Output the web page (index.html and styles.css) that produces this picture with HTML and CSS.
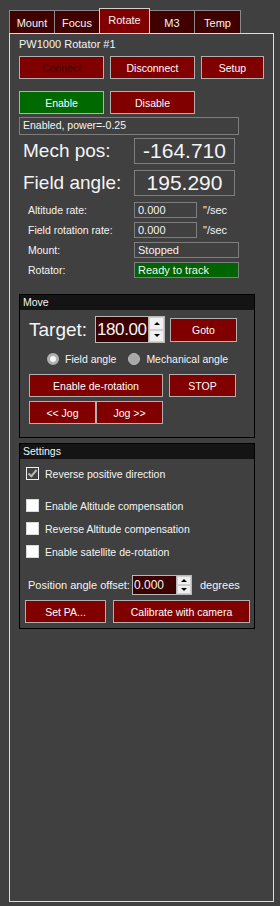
FILE: index.html
```html
<!DOCTYPE html>
<html lang="en">
<head>
  <meta charset="UTF-8">
  <title>PW1000 Rotator</title>
  <link rel="stylesheet" href="styles.css">
</head>
<body>
  <div class="window">
    <!-- tab strip -->
    <div class="tabs">
      <div class="tab">Mount</div>
      <div class="tab">Focus</div>
      <div class="tab active">Rotate</div>
      <div class="tab">M3</div>
      <div class="tab last">Temp</div>
    </div>

    <div class="panel">
      <div class="title">PW1000 Rotator #1</div>

      <div class="btn-row">
        <button class="btn btn-wide is-disabled">Connect</button>
        <button class="btn btn-wide">Disconnect</button>
        <button class="btn btn-setup">Setup</button>
      </div>

      <div class="btn-row enable-row">
        <button class="btn btn-wide btn-green">Enable</button>
        <button class="btn btn-wide">Disable</button>
      </div>

      <div class="status">Enabled, power=-0.25</div>

      <div class="big-row first">
        <span class="big-label">Mech pos:</span>
        <span class="readout">-164.710</span>
      </div>
      <div class="big-row">
        <span class="big-label">Field angle:</span>
        <span class="readout">195.290</span>
      </div>

      <div class="info-row first">
        <span class="info-label">Altitude rate:</span>
        <span class="field field-rate">0.000</span>
        <span class="unit">"/sec</span>
      </div>
      <div class="info-row">
        <span class="info-label">Field rotation rate:</span>
        <span class="field field-rate">0.000</span>
        <span class="unit">"/sec</span>
      </div>
      <div class="info-row">
        <span class="info-label">Mount:</span>
        <span class="field field-state">Stopped</span>
      </div>
      <div class="info-row">
        <span class="info-label">Rotator:</span>
        <span class="field field-state field-ok">Ready to track</span>
      </div>

      <!-- Move group -->
      <div class="group move">
        <div class="group-head">Move</div>
        <div class="target-row">
          <span class="target-label">Target:</span>
          <div class="spin spin-big">
            <span class="spin-value">180.00</span>
            <span class="spin-btns"><span class="arrow up"></span><span class="arrow down"></span></span>
          </div>
          <button class="btn btn-goto">Goto</button>
        </div>
        <div class="radio-row">
          <span class="radio checked">Field angle</span>
          <span class="radio">Mechanical angle</span>
        </div>
        <div class="btn-row move-row">
          <button class="btn btn-derot">Enable de-rotation</button>
          <button class="btn btn-stop">STOP</button>
        </div>
        <div class="btn-row jog-row">
          <button class="btn btn-jog">&lt;&lt; Jog</button>
          <button class="btn btn-jog">Jog &gt;&gt;</button>
        </div>
      </div>

      <!-- Settings group -->
      <div class="group settings">
        <div class="group-head">Settings</div>
        <div class="check-row first">
          <span class="check checked"></span>Reverse positive direction
        </div>
        <div class="check-row second">
          <span class="check"></span>Enable Altitude compensation
        </div>
        <div class="check-row">
          <span class="check"></span>Reverse Altitude compensation
        </div>
        <div class="check-row">
          <span class="check"></span>Enable satellite de-rotation
        </div>
        <div class="offset-row">
          <span class="offset-label">Position angle offset:</span>
          <div class="spin spin-small">
            <span class="spin-value">0.000</span>
            <span class="spin-btns"><span class="arrow up"></span><span class="arrow down"></span></span>
          </div>
          <span class="unit">degrees</span>
        </div>
        <div class="btn-row pa-row">
          <button class="btn btn-setpa">Set PA...</button>
          <button class="btn btn-calib">Calibrate with camera</button>
        </div>
      </div>
    </div>
  </div>
</body>
</html>
```

FILE: styles.css
```css
body {
  margin: 0;
  background-color: #404040;
  color: #f4f4f4;
  font-family: "Liberation Sans", Arial, sans-serif;
  font-size: 10.5px;
}
.window {
  height: 906px;
  box-sizing: border-box;
  padding: 8px 0 0 9px;
  border-left: 1px solid #383838;
  margin-left: -1px;
}

/* tabs */
.tabs {
  display: flex;
  align-items: flex-end;
  height: 25px;
}
.tab {
  width: 46px;
  height: 23px;
  box-sizing: border-box;
  margin-right: -1px;
  border: 1px solid #8a8a8a;
  border-bottom: none;
  background-color: #400000;
  display: flex;
  align-items: center;
  justify-content: center;
  padding-top: 1px;
  font-size: 11px;
}
.tab.active {
  width: 51px;
  height: 25px;
  background-color: #800000;
  border-color: #d0d0d0;
  padding-top: 0;
  padding-bottom: 3px;
  position: relative;
  z-index: 1;
}
.tab.last {
  width: 47px;
}

.panel {
  width: 265px;
  height: 869px;
  box-sizing: border-box;
  border: 1px solid #dcdcdc;
  padding: 4px 0 0 9px;
}
.title {
  line-height: 13px;
  font-size: 11px;
}

/* buttons */
.btn-row {
  display: flex;
  gap: 6px;
  margin-top: 5px;
}
.btn {
  height: 23px;
  box-sizing: border-box;
  padding: 0;
  background-color: #800000;
  border: 1px solid #b0b0b0;
  color: #ffffff;
  font-family: inherit;
  font-size: 10.5px;
}
.btn.is-disabled {
  color: #4a0000;
}
.btn-green {
  background-color: #006a00;
}
.btn-wide {
  width: 85px;
}
.btn-setup {
  width: 63px;
}
.enable-row {
  margin-top: 12px;
}

.status {
  width: 220px;
  height: 18px;
  box-sizing: border-box;
  margin-top: 3px;
  border: 1px solid #7e7e7e;
  padding-left: 3px;
  line-height: 15px;
}

/* large readouts */
.big-row {
  display: flex;
  align-items: center;
  margin-top: 6px;
}
.big-row.first {
  margin-top: 3px;
}
.big-label {
  width: 111px;
  margin-left: 4px;
  font-size: 19px;
}
.readout {
  width: 101px;
  height: 26px;
  box-sizing: border-box;
  border: 1px solid #7e7e7e;
  font-size: 21px;
  line-height: 24px;
  text-align: center;
}

/* small info rows */
.info-row {
  display: flex;
  align-items: center;
  height: 16px;
  margin-top: 4px;
}
.info-row.first {
  margin-top: 6px;
}
.info-label {
  width: 106px;
  margin-left: 9px;
}
.field {
  height: 16px;
  box-sizing: border-box;
  border: 1px solid #7e7e7e;
  padding-left: 3px;
  line-height: 14px;
  font-size: 11px;
}
.field-rate {
  width: 63px;
}
.field-state {
  width: 105px;
}
.field-ok {
  background-color: #006400;
}
.unit {
  margin-left: 6px;
  font-size: 11px;
}

/* group boxes */
.group {
  width: 236px;
  box-sizing: border-box;
  border: 1px solid #000000;
}
.group-head {
  height: 15px;
  line-height: 15px;
  padding-left: 3px;
  background-color: #141414;
}
.move {
  margin-top: 16px;
  padding-bottom: 13px;
}
.settings {
  margin-top: 5px;
  padding-bottom: 5px;
}

.target-row {
  display: flex;
  align-items: center;
  height: 27px;
  margin-top: 6px;
  padding-left: 9px;
}
.target-label {
  width: 66px;
  font-size: 19px;
}
.spin {
  display: flex;
  box-sizing: border-box;
  border: 1px solid #b8b8b8;
  background-color: #3c0000;
}
.spin-big {
  width: 70px;
  height: 27px;
}
.spin-small {
  width: 60px;
  height: 20px;
}
.spin-value {
  flex: 1;
  padding-left: 1px;
}
.spin-big .spin-value {
  font-size: 17px;
  line-height: 25px;
  letter-spacing: -0.4px;
}
.spin-small .spin-value {
  font-size: 12px;
  line-height: 18px;
}
.spin-btns {
  width: 15px;
  display: flex;
  flex-direction: column;
  background-color: #f0f0f0;
  border-left: 1px solid #b8b8b8;
}
.spin-small .spin-btns {
  width: 14px;
}
.arrow {
  flex: 1;
  display: flex;
  align-items: center;
  justify-content: center;
  border: 1px solid #d0d0d0;
}
.arrow::before {
  content: "";
  border-left: 3px solid transparent;
  border-right: 3px solid transparent;
}
.arrow.up::before {
  border-bottom: 3px solid #000000;
}
.arrow.down::before {
  border-top: 3px solid #000000;
}
.btn-goto {
  width: 67px;
  height: 24px;
  margin-left: 5px;
}

.radio-row {
  display: flex;
  align-items: center;
  height: 12px;
  margin-top: 10px;
  padding-left: 27px;
}
.radio {
  display: flex;
  align-items: center;
  gap: 6px;
  margin-right: 12px;
}
.radio::before {
  content: "";
  width: 12px;
  height: 12px;
  box-sizing: border-box;
  border-radius: 50%;
  background-color: #a8a8a8;
  border: 1px solid #b8b8b8;
}
.radio.checked::before {
  background-color: #f4f4f4;
  border: 3px solid #b0b0b0;
}

.move-row {
  margin-top: 9px;
  padding-left: 9px;
}
.btn-derot {
  width: 134px;
}
.btn-stop {
  width: 67px;
}
.jog-row {
  margin-top: 4px;
  padding-left: 9px;
  gap: 0;
}
.btn-jog {
  width: 67px;
}

/* settings */
.check-row {
  display: flex;
  align-items: center;
  height: 13px;
  margin-top: 10px;
  padding-left: 6px;
}
.check-row.first {
  margin-top: 8px;
}
.check-row.second {
  margin-top: 19px;
}
.check {
  width: 13px;
  height: 13px;
  box-sizing: border-box;
  margin-right: 6px;
  background-color: #ffffff;
  border: 1px solid #d8d8d8;
  position: relative;
}
.check.checked {
  background-color: #404040;
  border-color: #f0f0f0;
}
.check.checked::after {
  content: "";
  position: absolute;
  left: 3px;
  top: 0;
  width: 3px;
  height: 7px;
  border-right: 2px solid #b8b8b8;
  border-bottom: 2px solid #b8b8b8;
  transform: rotate(40deg);
}

.offset-row {
  display: flex;
  align-items: center;
  height: 20px;
  margin-top: 17px;
  padding-left: 8px;
}
.offset-label {
  width: 104px;
  font-size: 11px;
}
.offset-row .unit {
  margin-left: 8px;
}
.pa-row {
  margin-top: 5px;
  padding-left: 5px;
  gap: 7px;
}
.btn-setpa {
  width: 81px;
}
.btn-calib {
  width: 137px;
}
```
